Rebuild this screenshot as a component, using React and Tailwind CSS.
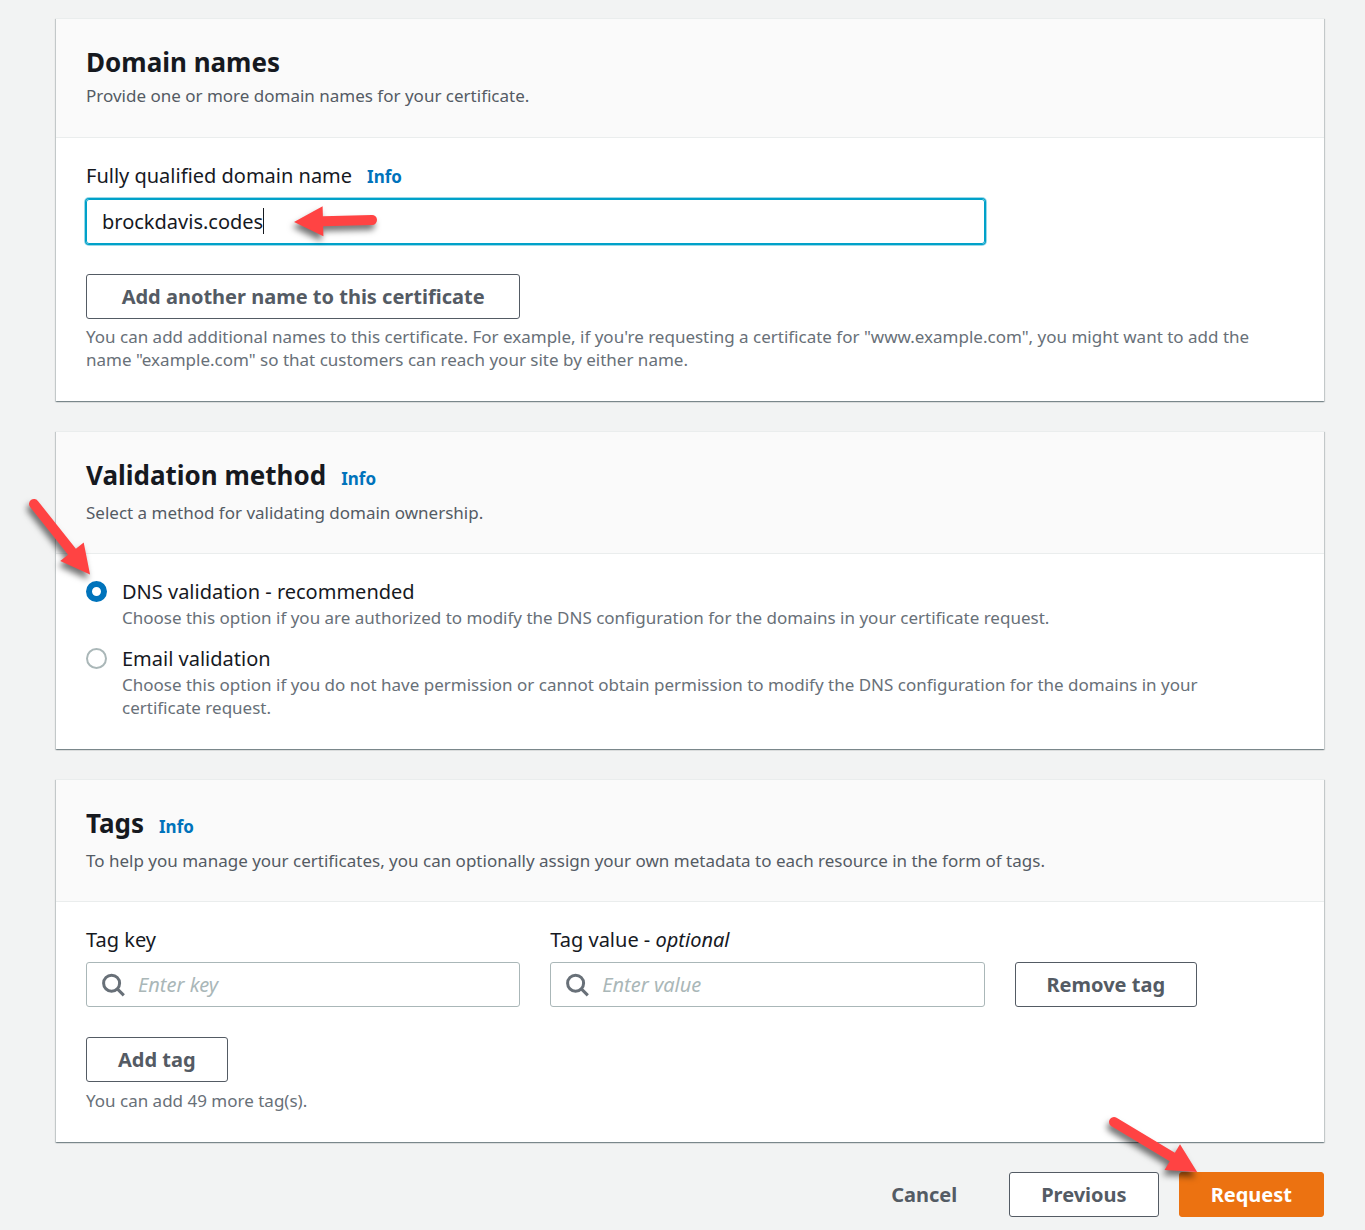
import React, { useState } from 'react'
import clsx from 'clsx'

const Info = () => (
  <a href="#info" className="text-[17px] font-bold text-[#0073bb]">Info</a>
)

const Card = ({ title, info, description, children }) => (
  <section className="bg-white shadow-[0_1px_1px_0_rgba(0,28,36,0.3),1px_1px_1px_0_rgba(0,28,36,0.15),-1px_1px_1px_0_rgba(0,28,36,0.15)]">
    <header className="border-b border-t border-[#eaeded] bg-[#fafafa] px-[30px] pt-[25px]">
      <div className="flex items-baseline gap-[15px]">
        <h2 className="text-[26px] leading-9 font-bold">{title}</h2>
        {info && <Info />}
      </div>
      <p className={clsx('text-[17px] leading-[23px] text-[#545b64]', info ? 'mt-2 pb-[29px]' : 'mt-1 pb-[30px]')}>
        {description}
      </p>
    </header>
    <div className="px-[30px] pt-[23px] pb-[30px]">{children}</div>
  </section>
)

const Hint = ({ className, children }) => (
  <p className={clsx('text-[17px] leading-[23px] text-[#687078]', className)}>{children}</p>
)

const Button = ({ variant = 'normal', className, children }) => (
  <button
    type="button"
    className={clsx(
      'h-[45px] rounded-[3px] border text-[20px] leading-[30px] font-bold whitespace-nowrap',
      variant === 'normal' && 'border-[#545b64] bg-white text-[#545b64]',
      variant === 'link' && 'border-transparent text-[#545b64]',
      variant === 'primary' && 'border-[#ec7211] bg-[#ec7211] text-white',
      className || 'px-[31px]'
    )}
  >
    {children}
  </button>
)

const SearchField = ({ id, label, placeholder }) => (
  <div className="col-span-3">
    <label htmlFor={id} className="mb-[7px] block text-[20px] leading-[30px]">{label}</label>
    <div className="flex h-[45px] items-center gap-3 rounded-[3px] border border-[#aab7b8] px-[15px]">
      <svg className="size-6 shrink-0" viewBox="0 0 24 24" fill="none" stroke="#687078" strokeWidth="3">
        <circle cx="9.6" cy="10.2" r="8" />
        <path d="M15.3 15.9L21.8 22.4" />
      </svg>
      <input
        id={id}
        type="text"
        placeholder={placeholder}
        className="w-full min-w-0 text-[20px] leading-[30px] outline-none placeholder:text-[#aab7b8] placeholder:italic"
      />
    </div>
  </div>
)

const RadioOption = ({ id, label, hint, checked, onChange }) => (
  <div className="flex gap-[15px] pr-5">
    <input
      id={id}
      type="radio"
      name="validation"
      checked={checked}
      onChange={onChange}
      className="mt-1 size-[21px] shrink-0 appearance-none rounded-full border-2 border-[#aab7b8] bg-white checked:border-[6px] checked:border-[#0073bb]"
    />
    <div>
      <label htmlFor={id} className="block text-[20px] leading-[29px]">{label}</label>
      <Hint>{hint}</Hint>
    </div>
  </div>
)

// Points from the origin (tail) to the right, the caller rotates it
const Arrow = ({ className, viewBox, transform, length }) => (
  <svg
    className={clsx('pointer-events-none absolute overflow-visible drop-shadow-[-2px_5px_3px_rgba(0,0,0,0.55)]', className)}
    viewBox={viewBox}
    aria-hidden="true"
  >
    <g transform={transform} fill="#ff4343">
      <path d={`M0 -5H${length - 29}V-15L${length} 0L${length - 29} 15V5H0A5 5 0 0 1 0 -5Z`} />
    </g>
  </svg>
)

const App = () => {
  const [domain, setDomain] = useState('brockdavis.codes')
  const [method, setMethod] = useState('dns')

  return (
    <main className="min-h-screen bg-[#f2f3f3] pt-[18px] pr-[41px] pb-[13px] pl-14 font-['Noto_Sans',sans-serif] text-[#16191f]">
      <div className="flex flex-col gap-[30px]">
        <Card title="Domain names" description="Provide one or more domain names for your certificate.">
          <div className="mb-2 flex items-baseline gap-[15px]">
            <label htmlFor="domain" className="text-[20px] leading-[30px]">Fully qualified domain name</label>
            <Info />
          </div>
          <div className="grid grid-cols-8 gap-[30px]">
            <div className="relative col-span-6">
              <input
                id="domain"
                type="text"
                value={domain}
                onChange={(e) => setDomain(e.target.value)}
                className="block h-[45px] w-full rounded-[3px] border border-[#00a1c9] px-[15px] text-[20px] leading-[30px] caret-transparent shadow-[0_0_0_1px_#00a1c9,0_0_0_2px_rgba(0,161,201,0.4)] outline-none"
              />
              <span className="pointer-events-none absolute top-[9px] left-[177px] h-[26px] w-px bg-[#16191f]" />
              <Arrow
                className="top-[6px] left-[208px] h-[34px] w-[84px]"
                viewBox="0 0 84 34"
                transform="translate(78 15) rotate(178.5)"
                length={78}
              />
            </div>
            <Button className="col-span-3 col-start-1">Add another name to this certificate</Button>
          </div>
          <Hint className="mt-[6px]">
            You can add additional names to this certificate. For example, if you're requesting a certificate for "www.example.com", you might want to add the name "example.com" so that customers can reach your site by either name.
          </Hint>
        </Card>

        <Card title="Validation method" info description="Select a method for validating domain ownership.">
          <div className="relative flex flex-col gap-[15px]">
            <RadioOption
              id="dns"
              label="DNS validation - recommended"
              hint="Choose this option if you are authorized to modify the DNS configuration for the domains in your certificate request."
              checked={method === 'dns'}
              onChange={() => setMethod('dns')}
            />
            <RadioOption
              id="email"
              label="Email validation"
              hint="Choose this option if you do not have permission or cannot obtain permission to modify the DNS configuration for the domains in your certificate request."
              checked={method === 'email'}
              onChange={() => setMethod('email')}
            />
            <Arrow
              className="-top-[78px] -left-[57px] h-[76px] w-[62px]"
              viewBox="0 0 62 76"
              transform="translate(5 5) rotate(51.5)"
              length={90}
            />
          </div>
        </Card>

        <Card
          title="Tags"
          info
          description="To help you manage your certificates, you can optionally assign your own metadata to each resource in the form of tags."
        >
          <div className="mb-[30px] grid grid-cols-8 items-end gap-x-[30px]">
            <SearchField id="tag-key" label="Tag key" placeholder="Enter key" />
            <SearchField id="tag-value" label={<>Tag value - <i>optional</i></>} placeholder="Enter value" />
            <div className="col-span-2">
              <Button>Remove tag</Button>
            </div>
          </div>
          <Button>Add tag</Button>
          <Hint className="mt-[7px]">You can add 49 more tag(s).</Hint>
        </Card>

        <footer className="flex justify-end gap-5">
          <Button variant="link">Cancel</Button>
          <Button>Previous</Button>
          <div className="relative">
            <Button variant="primary">Request</Button>
            <Arrow
              className="-top-[55px] -left-[70px] h-[58px] w-[90px]"
              viewBox="0 0 90 58"
              transform="translate(5 5) rotate(31)"
              length={97}
            />
          </div>
        </footer>
      </div>
    </main>
  )
}

export default App
